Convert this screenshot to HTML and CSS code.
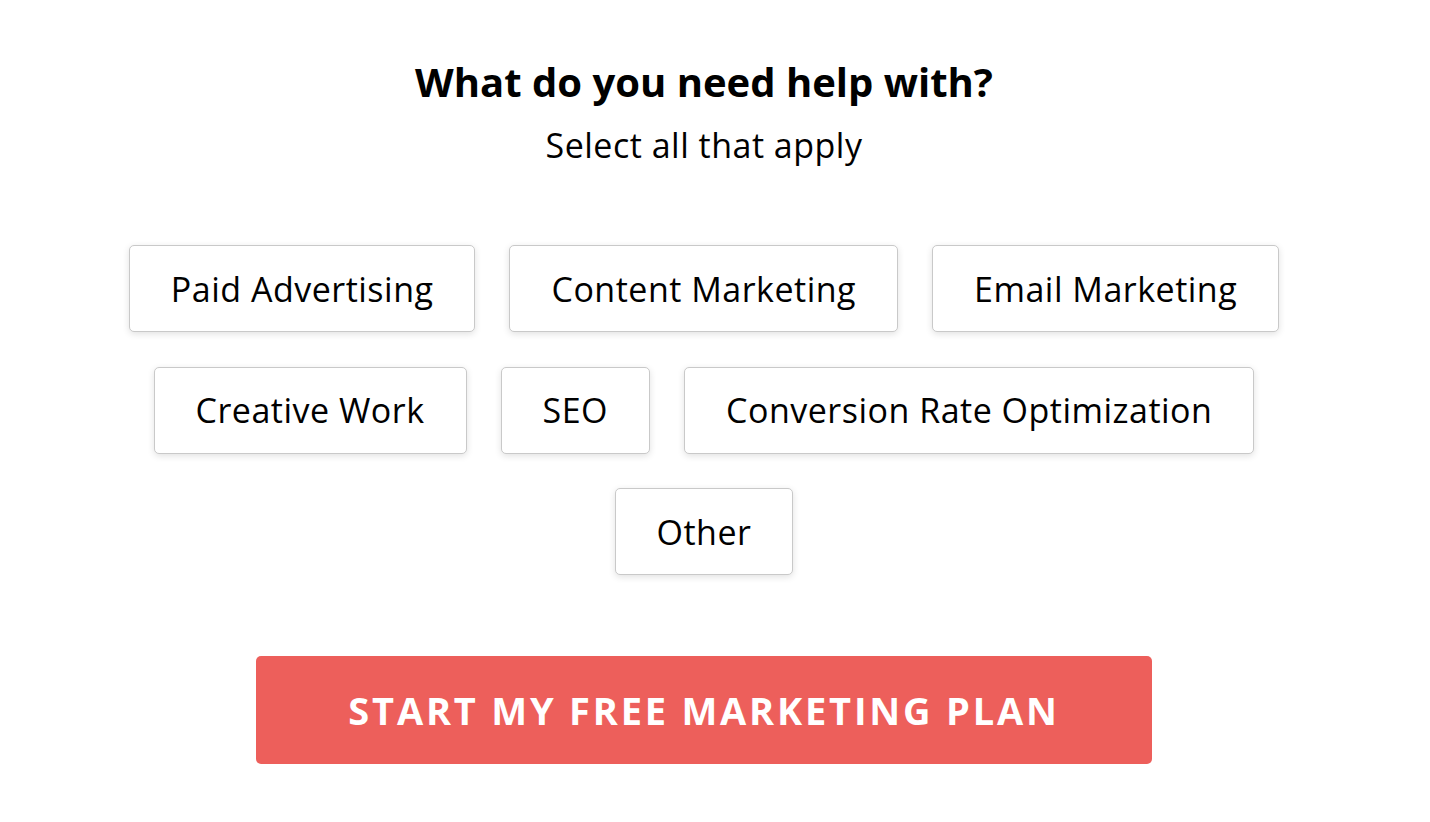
FILE: index.html
```html
<!DOCTYPE html>
<html>
<head>
<meta charset="utf-8">
<link rel="stylesheet" href="styles.css">
</head>
<body>
<div class="page">
  <h1 class="title">What do you need help with?</h1>
  <p class="subtitle">Select all that apply</p>
  <div class="chips">
    <div class="row">
      <button class="chip">Paid Advertising</button>
      <button class="chip">Content Marketing</button>
      <button class="chip">Email Marketing</button>
    </div>
    <div class="row">
      <button class="chip">Creative Work</button>
      <button class="chip">SEO</button>
      <button class="chip">Conversion Rate Optimization</button>
    </div>
    <div class="row">
      <button class="chip">Other</button>
    </div>
  </div>
  <button class="cta">START MY FREE MARKETING PLAN</button>
</div>
</body>
</html>
```

FILE: styles.css
```css
html, body {
  margin: 0;
  padding: 0;
  background: #ffffff;
}
body {
  font-family: "Open Sans", "Noto Sans", sans-serif;
  color: #000;
}
.page {
  width: 1408px;
  display: flex;
  flex-direction: column;
  align-items: center;
  padding-top: 56px;
}
.title {
  margin: 0;
  font-size: 40px;
  font-weight: 700;
  line-height: 52px;
}
.subtitle {
  margin: 15px 0 0;
  font-size: 34px;
  font-weight: 400;
  letter-spacing: 0.5px;
  line-height: 44px;
}
.chips {
  margin-top: 78px;
  display: flex;
  flex-direction: column;
  align-items: center;
  gap: 34.5px;
}
.row {
  display: flex;
  gap: 34px;
  justify-content: center;
}
.chip {
  font-family: "Open Sans", "Noto Sans", sans-serif;
  font-size: 34px;
  letter-spacing: 0.5px;
  color: #000;
  background: #fff;
  border: 1px solid #c9c9c9;
  border-radius: 5px;
  box-shadow: 0 2px 7px rgba(0,0,0,0.12);
  height: 87px;
  padding: 0 41px;
  line-height: 44px;
}
.cta {
  margin-top: 81px;
  width: 896px;
  height: 108px;
  background: #ed5f5b;
  border: none;
  border-radius: 5px;
  color: #fff;
  font-family: "Open Sans", "Noto Sans", sans-serif;
  font-weight: 700;
  font-size: 38px;
  letter-spacing: 2.8px;
  padding: 0;
}
```
